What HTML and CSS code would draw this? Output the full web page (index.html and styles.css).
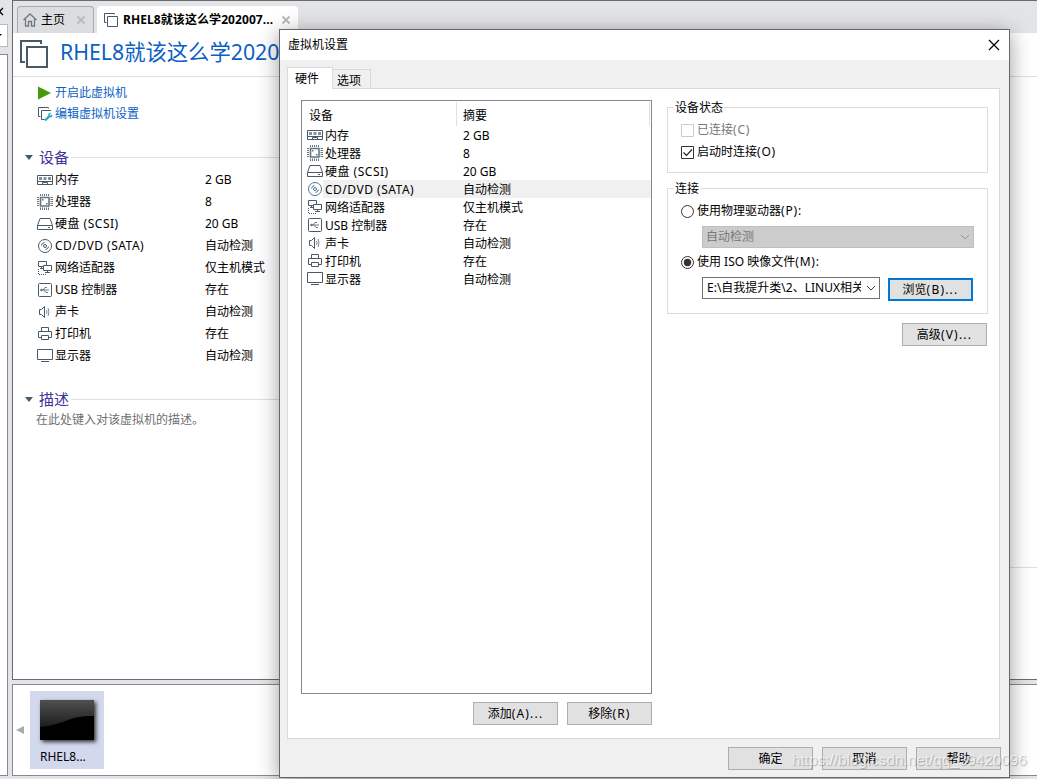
FILE: index.html
```
<!DOCTYPE html>
<html lang="zh-CN">
<head>
    <meta charset="UTF-8">
    <title>虚拟机设置</title>
    <link rel="stylesheet" href="styles.css">
</head>
<body>

    <!-- Icons used in both device lists -->
    <svg class="sprite" width="0" height="0">
        <symbol id="i-memory" viewBox="0 0 16 16">
            <path d="M.5 3.500h15v9H.5z" fill="#fff" stroke="currentColor"/>
            <path d="M2 5h3v3H2zM6.500 5h3v3h-3zM11 5h3v3h-3z" fill="#84929b"/>
            <path d="M1 9.500h14M5.500 12v-1.500h5V12" fill="none" stroke="currentColor"/>
        </symbol>
        <symbol id="i-cpu" viewBox="0 0 16 16">
            <path d="M3.500 0v16M5.500 0v16M7.500 0v16M9.500 0v16M11.500 0v16M0 3.500h16M0 5.500h16M0 7.500h16M0 9.500h16M0 11.500h16" stroke="#66757f"/>
            <path d="M2 2h11.500v11.500H2z" fill="#fff"/>
            <path d="M3.500 3.500h8.500v8.500H3.500z" fill="#fff" stroke="#66757f" stroke-width="1.600"/>
            <path d="M5 5h1.500v1.500H5zM9 9h1.500v1.500H9z" fill="#66757f"/>
        </symbol>
        <symbol id="i-disk" viewBox="0 0 16 16">
            <path d="M3 2.500h10l2.500 7v4H.5v-4zM.5 9.500h15" fill="none" stroke="currentColor"/>
            <path d="M11 11.500h2" stroke="currentColor"/>
        </symbol>
        <symbol id="i-cd" viewBox="0 0 16 16">
            <circle cx="8" cy="8" r="6.500" fill="none" stroke="currentColor"/>
            <circle cx="8" cy="8" r="1.500" fill="none" stroke="currentColor"/>
            <path d="M4.500 7.500A3.500 3.500 0 0 1 7.500 4.500M11.500 8.500A3.500 3.500 0 0 1 8.500 11.500" fill="none" stroke="currentColor"/>
        </symbol>
        <symbol id="i-net" viewBox="0 0 16 16">
            <path d="M1.500 1.500h8v5h-8z" fill="none" stroke="currentColor"/>
            <path d="M6.500 5.500h8v5h-8z" fill="#fff" stroke="currentColor"/>
            <path d="M4.500 7v2M3 8.500h3M10.500 11v2M8 12.500h5" stroke="currentColor"/>
            <path d="M1.500 9v5.500h8" fill="none" stroke="currentColor" stroke-dasharray="1 1"/>
        </symbol>
        <symbol id="i-usb" viewBox="0 0 16 16">
            <rect x="1.500" y="1.500" width="13" height="13" rx="1" fill="none" stroke="currentColor"/>
            <path d="M4 8h8M6 8l2-2.500h2M7 8l2 2.500h2" fill="none" stroke="#687883"/>
            <circle cx="4.500" cy="8" r="1.300" fill="#687883"/>
        </symbol>
        <symbol id="i-sound" viewBox="0 0 16 16">
            <path d="M2.500 5.500h2l3-3v11l-3-3h-2z" fill="none" stroke="currentColor"/>
            <path d="M9.500 6q1 2 0 4M11 4q2 4 0 8" fill="none" stroke="#788791"/>
        </symbol>
        <symbol id="i-print" viewBox="0 0 16 16">
            <path d="M4.500 5.500v-4h7v4M4.500 11.500h-3v-6h13v6h-3M4.500 9.500h7v4h-7z" fill="none" stroke="currentColor"/>
        </symbol>
        <symbol id="i-display" viewBox="0 0 16 16">
            <path d="M.5 1.500h15v10H.5z" fill="none" stroke="currentColor"/>
            <path d="M4 13.500h8" stroke="currentColor"/>
        </symbol>
        <symbol id="i-vm" viewBox="0 0 16 16">
            <path d="M11.500 2.500v-1h-10v9h2M4.500 4.500h10v10h-10z" fill="none" stroke="currentColor"/>
        </symbol>
        <symbol id="i-chevron" viewBox="0 0 10 10">
            <path d="M1 3l4 4 4-4" fill="none" stroke="currentColor"/>
        </symbol>
    </svg>

    <div class="app">
        <div class="library">
            <div class="library-close"><svg width="4" height="10"><path d="M-4 1l7 7M3 1l-7 7" stroke="#000" stroke-width="1.300"/></svg></div>
            <div class="library-search"><svg width="6" height="4"><path d="M-2 0h4L0 2z"/></svg></div>
            <div class="library-tree"></div>
        </div>

        <div class="main">
            <div class="tabs">
                <div class="tab">
                    <svg class="home" width="14" height="14" viewBox="0 0 14 14"><path d="M.5 7L7 1l6.500 6M2.500 6v7h3V8.500h3V13h3V6" fill="none" stroke="#6c7a83" stroke-width="1.300"/></svg>
                    <span>主页</span>
                    <svg class="tab-x" width="8" height="8" viewBox="0 0 8 8"><path d="M.5.5l7 7M7.500.5l-7 7"/></svg>
                </div>
                <div class="tab active">
                    <svg class="icon" width="16" height="16"><use href="#i-vm"/></svg>
                    <span>RHEL8就该这么学202007...</span>
                    <svg class="tab-x" width="8" height="8" viewBox="0 0 8 8"><path d="M.5.5l7 7M7.500.5l-7 7"/></svg>
                </div>
            </div>

            <div class="summary">
                <div class="vm-title">
                    <svg width="28" height="28" viewBox="0 0 28 28"><path d="M21 4V1H1v21h4M7 7h20v20H7z" fill="none" stroke="#485a67" stroke-width="2"/></svg>
                    <h1>RHEL8就该这么学20200710</h1>
                </div>
                <div class="actions">
                    <a><svg width="16" height="16"><path d="M1 1.500l13 6.500-13 6.500z" fill="#459b0c"/></svg>开启此虚拟机</a>
                    <a><svg class="icon" width="16" height="16"><path d="M11.500 2.500v-1h-10v9h2M14 4.500H4.500v9h3" fill="none" stroke="currentColor"/><path d="M8 14.500l4-4" stroke="#16a9c7" stroke-width="2.200"/><path d="M13.500 7l-1.500 1.500v2h2l1-1.500" fill="none" stroke="#16a9c7" stroke-width="1.500"/></svg>编辑虚拟机设置</a>
                </div>
                <div class="section-title"><i></i><h2>设备</h2></div>
                <ul class="device-list">
                    <li><svg><use href="#i-memory"/></svg><span>内存</span><b>2 GB</b></li>
                    <li><svg><use href="#i-cpu"/></svg><span>处理器</span><b>8</b></li>
                    <li><svg><use href="#i-disk"/></svg><span class="wide">硬盘 (SCSI)</span><b>20 GB</b></li>
                    <li><svg><use href="#i-cd"/></svg><span class="wide">CD/DVD (SATA)</span><b>自动检测</b></li>
                    <li><svg><use href="#i-net"/></svg><span>网络适配器</span><b>仅主机模式</b></li>
                    <li><svg><use href="#i-usb"/></svg><span>USB 控制器</span><b>存在</b></li>
                    <li><svg><use href="#i-sound"/></svg><span>声卡</span><b>自动检测</b></li>
                    <li><svg><use href="#i-print"/></svg><span>打印机</span><b>存在</b></li>
                    <li><svg><use href="#i-display"/></svg><span>显示器</span><b>自动检测</b></li>
                </ul>
                <div class="section-title"><i></i><h2>描述</h2></div>
                <p class="description">在此处键入对该虚拟机的描述。</p>
                <div class="details-line"></div>
            </div>

            <div class="thumbs">
                <div class="thumb-arrow"></div>
                <div class="thumb">
                    <svg width="54" height="40" viewBox="0 0 54 40">
                        <defs><linearGradient id="gloss" x2="0" y2="1"><stop stop-color="#505050"/><stop offset="1" stop-color="#1d1d1d"/></linearGradient></defs>
                        <path d="M0 0h54v40H0z"/>
                        <path d="M0 0h54v16C25 16 29 24 0 27z" fill="url(#gloss)"/>
                    </svg>
                    <span>RHEL8...</span>
                </div>
            </div>
        </div>
    </div>

    <!-- Settings dialog -->
    <div class="dialog">
        <div class="titlebar">
            <span>虚拟机设置</span>
            <svg width="12" height="12"><path d="M1 1l10 10M11 1L1 11" stroke="#000" stroke-width="1.200"/></svg>
        </div>
        <div class="dialog-tabs">
            <div class="dialog-tab selected">硬件</div>
            <div class="dialog-tab">选项</div>
        </div>
        <div class="page">
            <div class="hardware">
                <div class="listview">
                    <div class="list-head"><span>设备</span><span>摘要</span></div>
                    <ul class="hw-list">
                        <li><svg><use href="#i-memory"/></svg><div><span>内存</span><b>2 GB</b></div></li>
                        <li><svg><use href="#i-cpu"/></svg><div><span>处理器</span><b>8</b></div></li>
                        <li><svg><use href="#i-disk"/></svg><div><span class="wide">硬盘 (SCSI)</span><b>20 GB</b></div></li>
                        <li class="current"><svg><use href="#i-cd"/></svg><div><span class="wide">CD/DVD (SATA)</span><b>自动检测</b></div></li>
                        <li><svg><use href="#i-net"/></svg><div><span>网络适配器</span><b>仅主机模式</b></div></li>
                        <li><svg><use href="#i-usb"/></svg><div><span>USB 控制器</span><b>存在</b></div></li>
                        <li><svg><use href="#i-sound"/></svg><div><span>声卡</span><b>自动检测</b></div></li>
                        <li><svg><use href="#i-print"/></svg><div><span>打印机</span><b>存在</b></div></li>
                        <li><svg><use href="#i-display"/></svg><div><span>显示器</span><b>自动检测</b></div></li>
                    </ul>
                </div>
                <div class="list-buttons">
                    <button>添加<span class="key">(A)...</span></button>
                    <button>移除<span class="key">(R)</span></button>
                </div>
            </div>

            <div class="options">
                <div class="group status">
                    <div class="legend">设备状态</div>
                    <label class="disabled"><svg width="13" height="13"><path d="M.5.5h12v12H.5z" fill="#fff" stroke="#ccc"/></svg><span>已连接<span class="key">(C)</span></span></label>
                    <label><svg width="13" height="13"><path d="M.5.5h12v12H.5z" fill="#fff" stroke="#333"/><path d="M2.500 6.500l3 3 5.500-6" fill="none" stroke="#222" stroke-width="1.200"/></svg><span>启动时连接<span class="key">(O)</span></span></label>
                </div>
                <div class="group connection">
                    <div class="legend">连接</div>
                    <label><svg width="13" height="13"><circle cx="6.500" cy="6.500" r="6" fill="#fff" stroke="#333"/></svg><span>使用物理驱动器<span class="key">(P):</span></span></label>
                    <div class="combo off"><span>自动检测</span><svg width="10" height="10"><use href="#i-chevron"/></svg></div>
                    <label><svg width="13" height="13"><circle cx="6.500" cy="6.500" r="6" fill="#fff" stroke="#333"/><circle cx="6.500" cy="6.500" r="3.700" fill="#333"/></svg><span>使用 ISO 映像文件<span class="key">(M):</span></span></label>
                    <div class="iso-row">
                        <div class="combo"><span>E:\自我提升类\2、LINUX相关</span><svg width="10" height="10"><use href="#i-chevron"/></svg></div>
                        <button class="default">浏览<span class="key">(B)...</span></button>
                    </div>
                </div>
                <button class="advanced">高级<span class="key">(V)...</span></button>
            </div>
        </div>
        <div class="dialog-buttons">
            <button>确定</button>
            <button>取消</button>
            <button>帮助</button>
        </div>
    </div>

    <div class="watermark">https://blog.csdn.net/qq_39420096</div>
</body>
</html>
```
FILE: styles.css
```
* {
    box-sizing: border-box;
}

body {
    margin: 0;
    width: 1037px;
    height: 779px;
    overflow: hidden;
    position: relative;
    background: #e3e4e6;
    font-family: "Noto Sans", "Noto Sans CJK SC", sans-serif;
    font-size: 12px;
    line-height: 18px;
    color: #000;
}

h1, h2, p, ul {
    margin: 0;
    padding: 0;
    font-weight: normal;
}

ul {
    list-style: none;
}

b {
    font-weight: normal;
}

svg {
    display: block;
    flex: none;
}

.sprite {
    position: absolute;
}

.icon {
    color: #485a67;
}

.app {
    display: flex;
    gap: 4px;
    height: 776px;
}

/* Left strip of the library */
.library {
    width: 8px;
    display: flex;
    flex-direction: column;
}

.library-close {
    height: 24px;
    padding-top: 7px;
}

.library-search {
    height: 23px;
    padding-top: 9px;
    background: #fff;
    border: 1px solid #b8bbbe;
    border-left: 0;
}

.library-tree {
    flex: 1;
    margin-top: 7px;
    background: #fff;
    border: 1px solid #868991;
    border-left: 0;
}

.main {
    flex: 1;
    min-width: 0;
    display: flex;
    flex-direction: column;
}

.tabs {
    display: flex;
    align-items: flex-end;
    gap: 3px;
    height: 33px;
    padding-left: 4px;
    border-top: 1px solid #6a6b70;
    border-left: 1px solid #6a6b70;
}

.tab {
    display: flex;
    align-items: center;
    width: 77px;
    height: 27px;
    padding-left: 5px;
    background: #dcdde0;
    border: 1px solid #a9abaf;
    border-bottom: 0;
    border-radius: 4px 4px 0 0;
}

.tab .home {
    margin-right: 4px;
}

.tab-x {
    margin-left: 12px;
    stroke: #bbb;
    stroke-width: 2;
}

.tab.active {
    width: 201px;
    padding-left: 5px;
    background: #fff;
    border-color: #fff;
    font-weight: bold;
}

.active span {
    width: 153px;
    margin-left: 4px;
    white-space: nowrap;
    letter-spacing: 0.08px;
}

.active .tab-x {
    margin-left: 6px;
}

.summary {
    height: 647px;
    background: #fff;
    border-left: 1px solid #6a6b70;
    border-bottom: 1px solid #6a6b70;
}

.vm-title {
    display: flex;
    height: 44px;
    padding: 7px 0 0 7px;
    border-bottom: 1px solid #dedfe0;
}

.vm-title h1 {
    margin: -4px 0 0 12px;
    font-size: 21.300px;
    line-height: 32px;
    white-space: nowrap;
    color: #0b5fc6;
}

.actions {
    padding: 5px 0 0 24px;
    height: 69px;
}

.actions a {
    display: flex;
    align-items: center;
    gap: 2px;
    height: 21px;
    color: #0b5fc6;
}

.section-title {
    display: flex;
    align-items: center;
    width: 400px;
    height: 22px;
    padding-left: 12px;
}

.section-title i {
    border: 4.5px solid transparent;
    border-top: 5px solid #485a67;
    border-bottom: 0;
}

.section-title h2 {
    margin: 0 2px 0 6px;
    font-size: 15px;
    color: #42349c;
}

.section-title::after {
    content: "";
    flex: 1;
    height: 1px;
    background: #dedfe0;
}

.device-list {
    height: 220px;
    padding: 1px 0 0 24px;
}

.device-list li {
    display: flex;
    align-items: center;
    height: 22px;
}

.device-list svg, .hw-list svg {
    width: 16px;
    height: 16px;
    margin-right: 2px;
    color: #485a67;
}

.device-list span {
    width: 150px;
}

.wide {
    letter-spacing: 0.5px;
}

.key {
    letter-spacing: 0.8px;
}

.description {
    padding-left: 23px;
    line-height: 20px;
    color: #707070;
}

.details-line {
    margin-top: 137px;
    margin-left: 400px;
    height: 1px;
    background: #dedfe0;
}

.thumbs {
    display: flex;
    align-items: center;
    flex: 1;
    margin-top: 4px;
    border: 1px solid #868991;
    border-right: 0;
    background: #fff;
}

.thumb-arrow {
    margin: 0 6px 0 3px;
    border: 4px solid transparent;
    border-right: 8px solid #a5adb4;
    border-left: 0;
}

.thumb {
    width: 74px;
    height: 78px;
    padding: 9px 10px 0;
    background: #d2d9ed;
}

.thumb svg {
    margin-bottom: 8px;
    box-shadow: 2px 2px 4px #333;
}

/* Settings dialog */
.dialog {
    position: absolute;
    left: 279px;
    top: 29px;
    width: 731px;
    height: 749px;
    padding: 0 8px;
    background: #f0f0f0;
    border: 1px solid #66676a;
    box-shadow: 0 4px 20px rgba(0, 0, 0, 0.4);
}

.titlebar {
    display: flex;
    justify-content: space-between;
    align-items: center;
    height: 30px;
    margin: 0 -8px;
    padding: 0 9px 1px 8px;
    background: #fff;
}

.dialog-tabs {
    display: flex;
    align-items: flex-end;
    height: 28px;
    margin-left: -1px;
}

.dialog-tab {
    width: 38px;
    height: 19px;
    padding-left: 4px;
    line-height: 21px;
    border: 1px solid #d9d9d9;
    border-left: 0;
    border-bottom: 0;
}

.dialog-tab.selected {
    z-index: 1;
    width: 46px;
    height: 22px;
    margin-bottom: -1px;
    padding-left: 7px;
    background: #fff;
    border-left: 1px solid #d9d9d9;
}

.page {
    display: flex;
    gap: 15px;
    width: 713px;
    height: 651px;
    margin-left: -1px;
    padding: 11px 11px 0 13px;
    background: #fff;
    border: 1px solid #d9d9d9;
}

.hardware {
    width: 351px;
}

.listview {
    height: 594px;
    border: 1px solid #828790;
}

.list-head {
    display: flex;
    height: 25px;
    padding-top: 1px;
    line-height: 27px;
}

.list-head span {
    width: 155px;
    padding-left: 7px;
    border-right: 1px solid #e1e1e1;
}

.list-head span + span {
    width: 193px;
    padding-left: 6px;
}

.hw-list li {
    display: flex;
    align-items: center;
    height: 18px;
    padding-left: 5px;
}

.hw-list svg {
    margin-right: 0;
}

.hw-list div {
    display: flex;
    flex: 1;
    height: 18px;
    padding-left: 2px;
    line-height: 20px;
}

.hw-list span {
    width: 138px;
}

.hw-list .current div {
    background: #f0f0f0;
}

.hw-list .current svg {
    color: #4a7597;
}

button {
    width: 85px;
    height: 23px;
    padding: 0;
    font: inherit;
    color: #000;
    background: #e1e1e1;
    border: 1px solid #adadad;
}

button .key {
    letter-spacing: 1.2px;
}

.list-buttons {
    display: flex;
    justify-content: flex-end;
    gap: 9px;
    padding-top: 8px;
}

.options {
    width: 321px;
    padding-top: 7px;
}

.group {
    border: 1px solid #dcdcdc;
    padding-left: 13px;
}

.legend {
    width: max-content;
    height: 18px;
    margin: -9px 0 0 -7px;
    padding: 0 1px;
    background: #fff;
}

.group label {
    display: flex;
    align-items: center;
    gap: 3px;
    height: 22px;
}

.group .disabled {
    color: #777;
}

.status {
    height: 66px;
}

.status .legend {
    margin-bottom: 2px;
}

.connection {
    height: 126px;
    margin-top: 15px;
}

.connection .legend {
    margin-bottom: 2px;
}

.combo {
    display: flex;
    align-items: center;
    justify-content: space-between;
    width: 178px;
    height: 22px;
    padding: 0 3px 0 4px;
    background: #fff;
    border: 1px solid #707070;
}

.combo span {
    width: 154px;
    overflow: hidden;
    white-space: nowrap;
}

.combo svg {
    color: #444;
}

.combo.off {
    width: 272px;
    margin: 4px 0 3px 21px;
    padding-left: 3px;
    background: #ccc;
    border-color: #bfbfbf;
    color: #777;
}

.off svg {
    color: #999;
}

.iso-row {
    display: flex;
    gap: 8px;
    margin: 4px 0 0 21px;
}

button.default {
    border: 2px solid #0078d7;
    margin-top: 1px;
}

button.advanced {
    display: block;
    margin: 9px 1px 0 auto;
}

.dialog-buttons {
    display: flex;
    justify-content: flex-end;
    gap: 9px;
    padding-top: 8px;
}

.watermark {
    position: absolute;
    left: 792px;
    top: 750px;
    font-family: "Liberation Sans", Arial, sans-serif;
    font-size: 15.300px;
    line-height: 20px;
    color: rgba(255, 255, 255, 0.65);
    text-shadow: 1px 1px 1px rgba(0, 0, 0, 0.25);
}
```
